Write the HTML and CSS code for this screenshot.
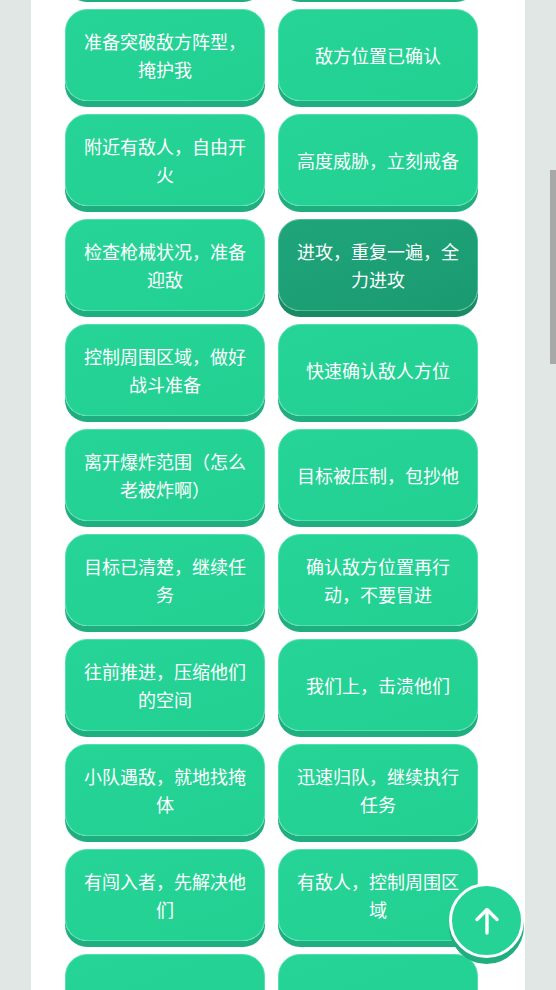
FILE: index.html
```html
<!DOCTYPE html>
<html lang="zh">
<head>
<meta charset="utf-8">
<link rel="stylesheet" href="styles.css">
</head>
<body>
<div class="panel">
  <div class="grid">
    <button class="btn" aria-label="上一行"></button>
    <button class="btn" aria-label="上一行"></button>
    <button class="btn">准备突破敌方阵型，掩护我</button>
    <button class="btn">敌方位置已确认</button>
    <button class="btn">附近有敌人，自由开火</button>
    <button class="btn">高度威胁，立刻戒备</button>
    <button class="btn">检查枪械状况，准备迎敌</button>
    <button class="btn active">进攻，重复一遍，全力进攻</button>
    <button class="btn">控制周围区域，做好战斗准备</button>
    <button class="btn">快速确认敌人方位</button>
    <button class="btn">离开爆炸范围（怎么老被炸啊）</button>
    <button class="btn">目标被压制，包抄他</button>
    <button class="btn">目标已清楚，继续任务</button>
    <button class="btn">确认敌方位置再行动，不要冒进</button>
    <button class="btn">往前推进，压缩他们的空间</button>
    <button class="btn">我们上，击溃他们</button>
    <button class="btn">小队遇敌，就地找掩体</button>
    <button class="btn">迅速归队，继续执行任务</button>
    <button class="btn">有闯入者，先解决他们</button>
    <button class="btn">有敌人，控制周围区域</button>
    <button class="btn" aria-label="下一行"></button>
    <button class="btn" aria-label="下一行"></button>
  </div>
</div>
<div class="scrollbar"></div>
<button class="top-btn" aria-label="返回顶部">
  <svg width="30" height="30" viewBox="0 0 30 30" fill="none" stroke="#fff" stroke-width="3.4" stroke-linecap="round" stroke-linejoin="round">
    <path d="M15 27V4"/>
    <path d="M5 13.5L15 3.5L25 13.5"/>
  </svg>
</button>
</body>
</html>
```
FILE: styles.css
```css
html, body {
  margin: 0;
  padding: 0;
  height: 990px;
  overflow: hidden;
}
body {
  background: #e1e7e5;
  font-family: "Noto Sans CJK SC", "Noto Sans", sans-serif;
}
.panel {
  margin-left: 31px;
  width: 494px;
  height: 990px;
  background: #ffffff;
  overflow: hidden;
}
.grid {
  display: grid;
  grid-template-columns: 200px 200px;
  column-gap: 13px;
  row-gap: 13px;
  padding-left: 34px;
  margin-top: -96px;
}
.btn {
  height: 92px;
  box-sizing: border-box;
  border: 1.5px solid #52e0ad;
  border-radius: 22px;
  background: linear-gradient(160deg, #26d497 0%, #22d092 100%);
  box-shadow: 0 6px 0 #1fae80;
  color: #ffffff;
  font-family: "Noto Sans CJK SC", "Noto Sans", sans-serif;
  font-size: 18px;
  line-height: 28px;
  padding: 0 15px;
  text-align: center;
  cursor: pointer;
}
.btn.active {
  background: linear-gradient(160deg, #1fa57a 0%, #1b9a70 100%);
  border-color: #4cbd95;
  box-shadow: 0 6px 0 #1a8a64;
}
.scrollbar {
  position: fixed;
  right: 0;
  top: 170px;
  width: 6px;
  height: 194px;
  background: #a8a8a8;
}
.top-btn {
  position: fixed;
  left: 449px;
  top: 883px;
  width: 75px;
  height: 75px;
  box-sizing: border-box;
  border-radius: 50%;
  border: 3px solid #ffffff;
  background: #24d395;
  box-shadow: 0 6px 0 #1fae80;
  display: flex;
  align-items: center;
  justify-content: center;
  padding: 0;
  cursor: pointer;
}
```
